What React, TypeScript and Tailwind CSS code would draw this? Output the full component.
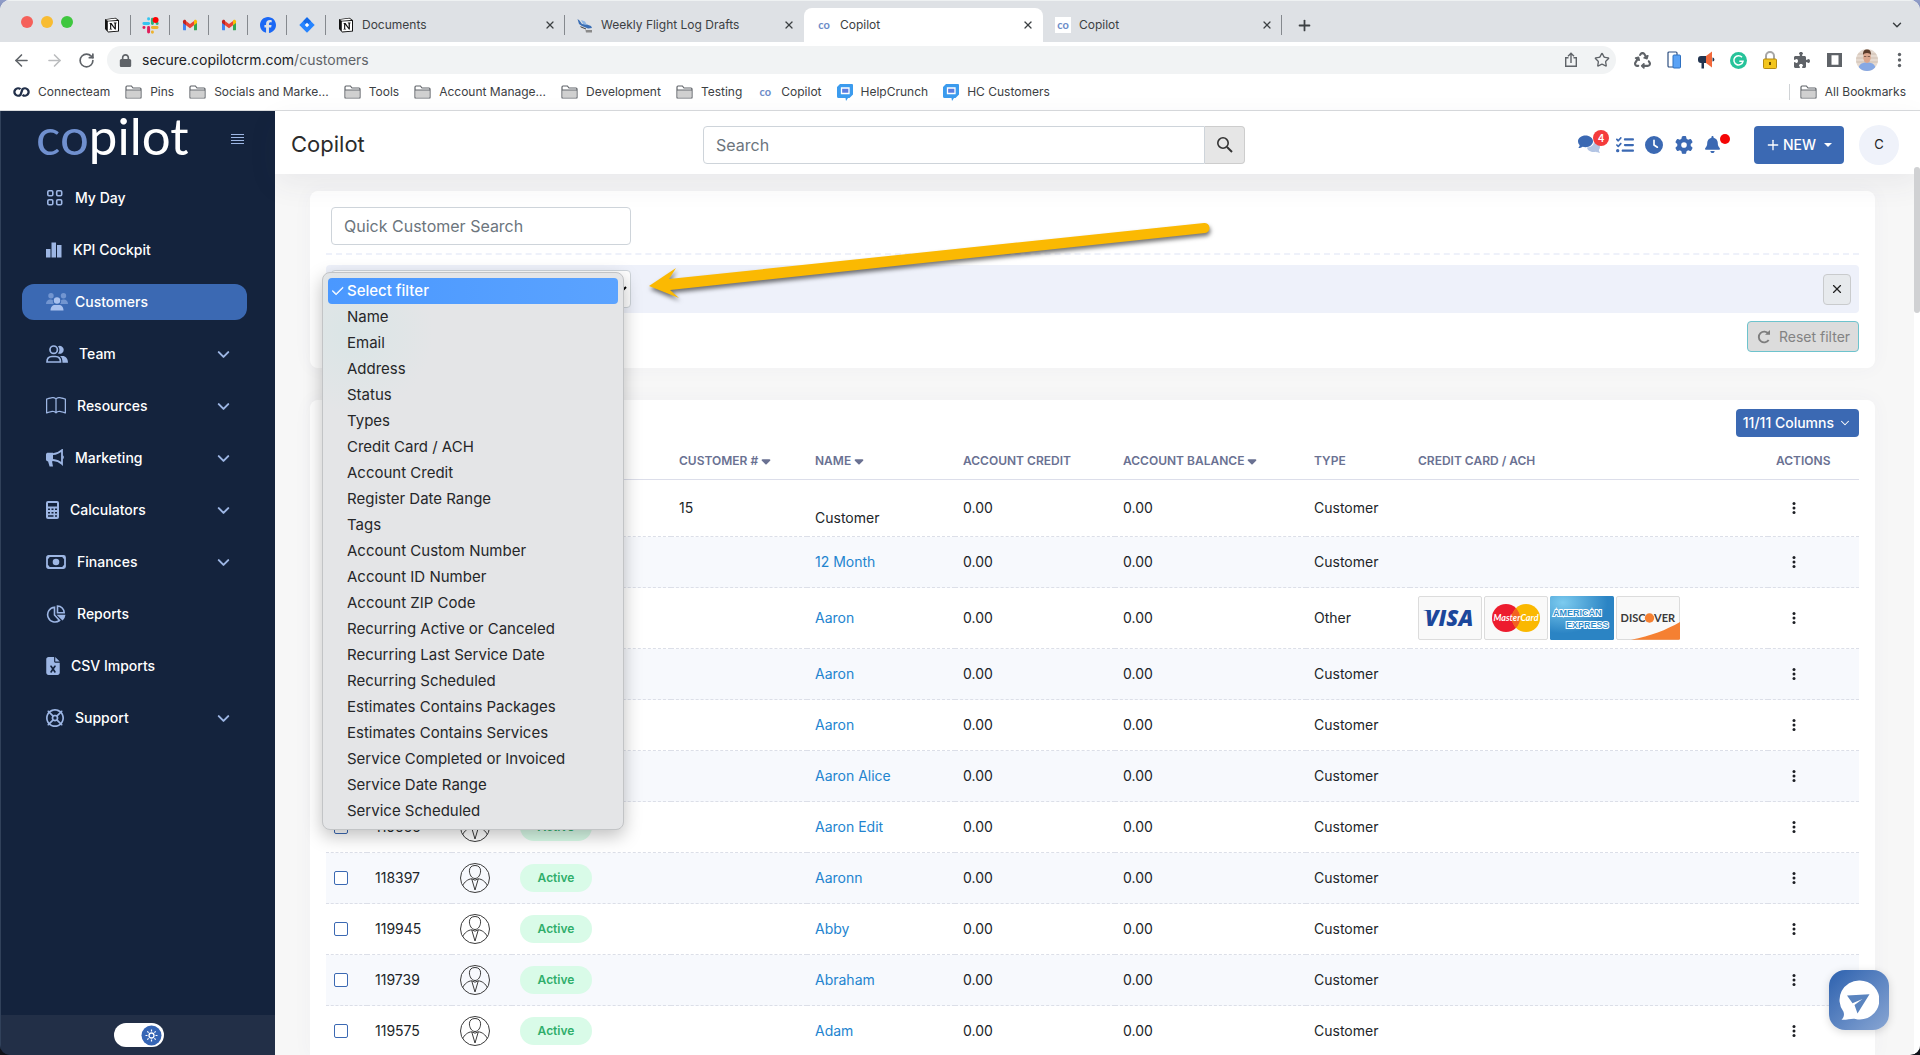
import React from "react";
import {
  FaRegLifeRing, FaClock, FaGear, FaBell, FaListCheck, FaFileExcel, FaCaretDown,
  FaFacebook, FaPuzzlePiece, FaRecycle, FaLock,
} from "react-icons/fa6";
import { BsBook, BsCheck2 } from "react-icons/bs";
import { ArrowLeft, ArrowRight, ChevronDown, Plus, RotateCw, Star, X } from "lucide-react";

const Notion = () => (
  <svg width="16" height="16" viewBox="0 0 16 16">
    <path d="M1 2.2 11.5.8 15 3.2V14.6L4.2 15.4 1 12z" fill="#111" />
    <path d="M3.8 4.6 14 3.9v9.9l-10.2.7z" fill="#fff" />
    <path d="M1.8 2.7 11.3 1.6l2 1.3-9.5.8z" fill="#fff" />
    <path d="M5.4 6h2.2l3 4.6V6.4l-.8-.2v-.6h2.8v.6l-.7.2v6.2h-1L7.2 7.8v4l.9.3v.5H5.4V12l.7-.3V6.7l-.7-.2z" fill="#111" />
  </svg>
);
const Slack = () => (
  <svg width="17" height="17" viewBox="0 0 16 16" strokeWidth="2.8" strokeLinecap="round">
    <path d="M6.2 1.6v.2M1.8 6.2h4.4" stroke="#36c5f0" />
    <path d="M9.8 2v4.2M14.2 6.2h.1" stroke="#2eb67d" />
    <path d="M9.8 14.3v-.1M9.8 9.8h4.4" stroke="#ecb22e" />
    <path d="M6.2 9.8v4.4M1.8 9.8h.1" stroke="#e01e5a" />
    <circle cx="12.8" cy="2.8" r="2.8" fill="#f00" />
  </svg>
);
const Gmail = () => (
  <svg width="16" height="16" viewBox="0 0 16 16">
    <path d="M1 4v8.4c0 .5.4.9.9.9H4V7z" fill="#4285f4" />
    <path d="M15 4v8.4c0 .5-.4.9-.9.9H12V7z" fill="#34a853" />
    <path d="M4 3.9v4.3l4 3 4-3V3.9L8 7z" fill="#ea4335" />
    <path d="M1 4.3c0-1.5 1.6-2 2.5-1.3l.5.4v4.8L1 6z" fill="#c5221f" />
    <path d="M15 4.3c0-1.5-1.6-2-2.5-1.3l-.5.4v4.8L15 6z" fill="#fbbc04" />
  </svg>
);
const Jira = () => (
  <svg width="16" height="16" viewBox="0 0 16 16">
    <path d="M8 .3 15.7 8 8 15.7.3 8z" fill="#2684ff" />
    <path d="M8 .3 11.9 4.2 8 8 4.2 4.2z" fill="#1268e8" />
    <path d="M8 5.8 10.2 8 8 10.2 5.8 8z" fill="#fff" />
  </svg>
);
const Plane = () => (
  <svg width="16" height="16" viewBox="0 0 16 16">
    <path d="M.5 2 2.5 3.4 5 7l5 .5 4 1.5 1 2-4 .5-6-2.5L2 7z" fill="#3b6fb5" />
    <path d="M4 3l4 1.5L10 8 6 7z" fill="#8fb6e4" />
    <path d="M8.500 13H15v2.500H9z" fill="#8a8a8a" />
    <path d="M3 9l6 2.500v1L4 10.500z" fill="#444" />
  </svg>
);
const Co = () => <span className="w-4 text-center font-['Lato'] text-[11px] font-bold leading-4 text-[#6b8bc8]">co</span>;
const Folder = () => (
  <svg width="17" height="14" viewBox="0 0 17 14">
    <path d="M1 12.4V2.2C1 1.5 1.4 1 2 1h4.4l1.6 2H15c.6 0 1 .4 1 1v8.4c0 .4-.3.6-.6.6H1.6c-.4 0-.6-.2-.6-.6z" fill="#fff" stroke="#5f6368" strokeWidth="1.2" />
    <path d="M1.6 5.2h13.8v7.2H1.6z" fill="#d0d0d0" />
    <path d="M1 5h15" stroke="#5f6368" strokeWidth="1" />
  </svg>
);
const HelpCrunch = () => (
  <svg width="16" height="17" viewBox="0 0 16 17">
    <path d="M3 0h12a1 1 0 0 1 1 1v9.5L12.5 14H11l-2 3-.5-3H1.5A1.5 1.5 0 0 1 0 12.500V3z" fill="#3b9bee" />
    <path d="M4.500 4h7.500v5.500H4.500z" fill="#5c7de0" stroke="#fff" strokeWidth="1.3" />
  </svg>
);
const Infinity8 = () => (
  <svg width="17" height="12" viewBox="0 0 17 12" fill="none" stroke="#22304a" strokeWidth="2.300">
    <path d="M7.500 3.200A3.700 3.700 0 1 0 7.500 8.800L9.500 3.200A3.700 3.700 0 1 1 9.500 8.800" />
  </svg>
);

const Kebab = ({ r = 2 }: { r?: number }) => (
  <svg width="5" height="16" viewBox="0 0 5 16" fill="currentColor">
    <circle cx="2.500" cy="2.500" r={r} /><circle cx="2.500" cy="8" r={r} /><circle cx="2.500" cy="13.500" r={r} />
  </svg>
);

/* ---------- sidebar icons ---------- */
const IconGrid = () => (
  <svg width="18" height="18" viewBox="0 0 18 18" fill="none" stroke="#9db6e4" strokeWidth="1.600">
    <rect x="1.800" y="1.800" width="5" height="5" rx="1.200" /><rect x="10.700" y="1.800" width="5" height="5" rx="1.200" />
    <rect x="1.800" y="10.700" width="5" height="5" rx="1.200" /><rect x="10.700" y="10.700" width="5" height="5" rx="1.200" />
  </svg>
);
const IconBars = () => (
  <svg width="16" height="16" viewBox="0 0 16 16" fill="#9db6e4">
    <path d="M0 7h4.500v8.500H0zM5.500 .5H10v15H5.500zM11 3h4.500v12.500H11z" />
  </svg>
);
const IconCustomers = () => (
  <svg width="22" height="18" viewBox="0 0 22 18" fill="#a9c1ee">
    <g opacity=".5"><circle cx="5" cy="2.800" r="2.700" /><circle cx="17.500" cy="2.800" r="2.700" /><path d="M0 11c0-3 2-4.500 4-4.500 1.500 0 2.300.4 3 1-.3 1.500 0 2.700 1 3.500zM22 11c0-3-2-4.500-4-4.500-1.500 0-2.300.4-3 1 .3 1.500 0 2.700-1 3.500z" /></g>
    <circle cx="11" cy="7.500" r="3.200" /><path d="M4.500 17.500C4.500 14 6.500 12 9 12h4c2.500 0 4.500 2 4.500 5.500z" />
  </svg>
);
const IconTeam = () => (
  <svg width="22" height="18" viewBox="0 0 22 18">
    <circle cx="7.700" cy="4.700" r="3.700" fill="none" stroke="#9db6e4" strokeWidth="1.700" />
    <path d="M1 17c0-3.500 2.200-5.500 5-5.500h3.500c2.800 0 5 2 5 5.500z" fill="none" stroke="#9db6e4" strokeWidth="1.700" />
    <path d="M12 8.400a5.200 5.200 0 0 0 0-7.200 4 4 0 1 1 0 7.200zM14 11h2.500c3 0 5.500 2.200 5.500 6.800h-5.500C16.500 14 15.500 12 14 11z" fill="#9db6e4" />
  </svg>
);
const IconHorn = () => (
  <svg width="18" height="18" viewBox="0 0 18 18" fill="#9db6e4">
    <path d="M0 5.500C0 4.400.9 3.800 2 3.800h5v8.500H6l1 5.200H3.600L2 12.300C.9 12.300 0 11.500 0 10.400z" />
    <path d="M7 5.200C11 5 13.500 3.500 16 1.200v13.700c-2.500-2.400-5-3.600-9-3.900" fill="none" stroke="#9db6e4" strokeWidth="1.800" />
    <path d="M16.500 6.300c1.800.6 1.800 3.300 0 4z" />
  </svg>
);
const IconCalc = () => (
  <svg width="13" height="18" viewBox="0 0 13 18">
    <rect x="0" y="0" width="13" height="18" rx="2" fill="#9db6e4" />
    <path d="M2 2h9v3.500H2zM2 7.500h2V9H2zM5.500 7.500h2V9h-2zM9 7.500h2V9H9zM2 11h2v1.500H2zM5.500 11h2v1.500h-2zM9 11h2v1.500H9zM2 14.300h5.500v1.500H2zM9 14.300h2v1.500H9z" fill="#14233d" />
  </svg>
);
const IconMoney = () => (
  <svg width="20" height="14" viewBox="0 0 20 14">
    <rect x="1" y="1" width="18" height="12" rx="1.500" fill="none" stroke="#9db6e4" strokeWidth="1.800" />
    <circle cx="10" cy="7" r="3.300" fill="#9db6e4" />
    <path d="M1 4c1.600 0 2.700-1 2.700-3H1zM19 4c-1.600 0-2.700-1-2.700-3H19zM1 10c1.600 0 2.700 1 2.700 3H1zM19 10c-1.600 0-2.700 1-2.700 3H19z" fill="#9db6e4" />
  </svg>
);
const IconPie = () => (
  <svg width="20" height="18" viewBox="0 0 20 18" fill="none" stroke="#9db6e4" strokeWidth="1.600">
    <path d="M8.500 2.200A7.400 7.400 0 1 0 13.500 15.500L8.500 10z" />
    <path d="M11.500 1v6.800h6.700A6.800 6.800 0 0 0 11.500 1z" />
    <path d="M12.500 10.500h6a6.500 6.500 0 0 1-2 4z" fill="#9db6e4" />
  </svg>
);

type NavItem = { label: string; icon: React.ReactNode; more?: boolean; active?: boolean };
const NAV: NavItem[] = [
  { label: "My Day", icon: <IconGrid /> },
  { label: "KPI Cockpit", icon: <IconBars /> },
  { label: "Customers", icon: <IconCustomers />, active: true },
  { label: "Team", icon: <IconTeam />, more: true },
  { label: "Resources", icon: <BsBook size={20} />, more: true },
  { label: "Marketing", icon: <IconHorn />, more: true },
  { label: "Calculators", icon: <IconCalc />, more: true },
  { label: "Finances", icon: <IconMoney />, more: true },
  { label: "Reports", icon: <IconPie /> },
  { label: "CSV Imports", icon: <FaFileExcel size={18} className="-mx-0.5" /> },
  { label: "Support", icon: <FaRegLifeRing size={18} />, more: true },
];

const FILTERS = [
  "Select filter", "Name", "Email", "Address", "Status", "Types", "Credit Card / ACH", "Account Credit",
  "Register Date Range", "Tags", "Account Custom Number", "Account ID Number", "Account ZIP Code",
  "Recurring Active or Canceled", "Recurring Last Service Date", "Recurring Scheduled",
  "Estimates Contains Packages", "Estimates Contains Services", "Service Completed or Invoiced",
  "Service Date Range", "Service Scheduled",
];

type Row = { id?: string; num?: string; name: string; type?: string; plain?: boolean; cards?: boolean };
const ROWS: Row[] = [
  { num: "15", name: "Customer", plain: true },
  { name: "12 Month" },
  { name: "Aaron", type: "Other", cards: true },
  { name: "Aaron" },
  { name: "Aaron" },
  { name: "Aaron Alice" },
  { id: "119655", name: "Aaron Edit" },
  { id: "118397", name: "Aaronn" },
  { id: "119945", name: "Abby" },
  { id: "119739", name: "Abraham" },
  { id: "119575", name: "Adam" },
];

const BOOKMARKS: [string, React.ReactNode][] = [
  ["Connecteam", <Infinity8 />], ["Pins", <Folder />], ["Socials and Marke...", <Folder />], ["Tools", <Folder />],
  ["Account Manage...", <Folder />], ["Development", <Folder />], ["Testing", <Folder />], ["Copilot", <Co />],
  ["HelpCrunch", <HelpCrunch />], ["HC Customers", <HelpCrunch />],
];

function Tab({ icon, title, active, line }: { icon: React.ReactNode; title: string; active?: boolean; line?: boolean }) {
  return (
    <div className={`relative flex h-[34px] w-[239px] items-center pl-3 pr-[7px] ${active ? "rounded-t-lg bg-white" : ""}`}>
      <span className="flex w-4 shrink-0 justify-center">{icon}</span>
      <span className="ml-2 grow text-xs text-[#3c4043]">{title}</span>
      <button aria-label={`Close ${title}`} className="flex w-4 justify-center text-[#3c4043]"><X size={12} strokeWidth={2.5} /></button>
      {line && <span className="absolute right-0 top-[7px] h-5 w-px bg-[#85898e]" />}
    </div>
  );
}

function Browser() {
  return (
    <header className="shrink-0 border-b border-[#d9dbdd] bg-white">
      <div className="flex h-[42px] items-end border-t border-[#eef1f2] bg-[#dee1e5]">
        <div className="flex w-[92px] gap-2 self-center pl-[21px]">
          <span className="size-3 rounded-full bg-[#f5605a]" />
          <span className="size-3 rounded-full bg-[#f8bc32]" />
          <span className="size-3 rounded-full bg-[#3fc73f]" />
        </div>
        {[<Notion />, <Slack />, <Gmail />, <Gmail />, <FaFacebook size={16} color="#1b68f5" />, <Jira />].map((ic, i) => (
          <div key={i} className="relative flex h-[34px] w-[39px] items-center justify-center">
            {ic}
            <span className="absolute right-0 top-[7px] h-5 w-px bg-[#85898e]" />
          </div>
        ))}
        <Tab icon={<Notion />} title="Documents" line />
        <Tab icon={<Plane />} title="Weekly Flight Log Drafts" />
        <Tab icon={<Co />} title="Copilot" active />
        <Tab icon={<span className="flex bg-white"><Co /></span>} title="Copilot" line />
        <button aria-label="New tab" className="mb-2 ml-3.5 text-[#3c4043]"><Plus size={17} strokeWidth={2.5} /></button>
        <button aria-label="Search tabs" className="mb-2.5 ml-auto mr-4 text-[#3c4043]"><ChevronDown size={14} strokeWidth={2.5} /></button>
      </div>
      <div className="flex h-9 items-center pr-[13px] text-[#5f6368]">
        <button aria-label="Back" className="ml-3"><ArrowLeft size={19} /></button>
        <button aria-label="Forward" className="ml-3.5 text-[#babcbe]"><ArrowRight size={19} /></button>
        <button aria-label="Reload" className="ml-3.5"><RotateCw size={17} strokeWidth={2.4} /></button>
        <div className="ml-3 flex h-7 grow items-center rounded-full bg-[#f1f3f4] pl-3 pr-1.5">
          <FaLock size={13} />
          <span className="ml-2.5 grow text-sm text-[#202124]">secure.copilotcrm.com<span className="text-[#5f6368]">/customers</span></span>
          <svg width="14" height="16" viewBox="0 0 14 16" fill="none" stroke="#5f6368" strokeWidth="1.400"><path d="M4.500 5.800H1.700v8.500h10.600V5.800H9.500M7 11V1.500M4 4.300l3-3 3 3" /></svg>
          <Star size={16} className="ml-4" />
        </div>
        <div className="ml-3 flex items-center">
          <span className="flex w-8 justify-center pr-1"><FaRecycle size={17} /></span>
          <span className="flex w-8 justify-center pr-1">
            <svg width="16" height="18" viewBox="0 0 16 18"><rect x="2" y="1" width="9" height="15" rx="1" fill="#fff" stroke="#2e4f80" strokeWidth="1.200" /><rect x="7" y="4" width="7.500" height="13" rx="1" fill="#5aa2f5" stroke="#2e70c0" /></svg>
          </span>
          <span className="flex w-8 justify-center pr-1">
            <svg width="17" height="18" viewBox="0 0 17 18"><path d="M3 5h5v7H6v5.500H3.500V12H3a3 3 0 0 1-3-3V8a3 3 0 0 1 3-3z" fill="#22344f" /><path d="M8 5l6-4.500v16L8 12z" fill="#f2693b" /><path d="M14.500 6.500c2.500.3 2.500 4 0 4z" fill="#22344f" /></svg>
          </span>
          <span className="flex w-8 justify-center pr-1">
            <svg width="17" height="17" viewBox="0 0 17 17"><circle cx="8.500" cy="8.500" r="8.500" fill="#27c39a" /><path d="M12 5.300A4.600 4.600 0 1 0 13 9.300H9.300" fill="none" stroke="#fff" strokeWidth="1.500" /></svg>
          </span>
          <span className="flex w-8 justify-center pr-1">
            <svg width="14" height="18" viewBox="0 0 14 18"><path d="M3 9V5a4 4 0 0 1 8 0v4" fill="none" stroke="#a6a6a6" strokeWidth="2" /><rect x=".5" y="8" width="13" height="9.500" rx="1" fill="#f3c51d" stroke="#b58a12" /><path d="M7 11v3" stroke="#6b4e00" strokeWidth="2" /></svg>
          </span>
          <span className="flex w-8 justify-center pr-1"><FaPuzzlePiece size={16} /></span>
          <span className="flex w-8 justify-center pr-1">
            <svg width="15" height="16" viewBox="0 0 15 16"><path d="M0 1h15v14H0zM4.500 3.300v9.400h7V3.300z" fill="#5f6368" fillRule="evenodd" /></svg>
          </span>
          <svg className="ml-1" width="22" height="22" viewBox="0 0 22 22">
            <clipPath id="me"><circle cx="11" cy="11" r="11" /></clipPath>
            <g clipPath="url(#me)"><path d="M0 0h22v22H0z" fill="#e5d9cf" /><path d="M0 5h22M0 9h22M0 13h22" stroke="#cfbfb2" /><path d="M2 22c0-6 3-8.500 9-8.500s9 2.500 9 8.500z" fill="#86a8e4" /><ellipse cx="11" cy="8" rx="3.800" ry="6" fill="#dba68d" /><path d="M7 6C7 2 8 .5 11 .5S15 2 15 6C14 3.300 8 3.300 7 6z" fill="#5a3b2a" /><path d="M8 7.500h2.300M11.700 7.500H14" stroke="#6b4a3c" strokeWidth=".8" /></g>
          </svg>
          <button aria-label="Menu" className="ml-[13px] flex w-4 justify-center"><Kebab r={1.7} /></button>
        </div>
      </div>
      <nav className="flex h-8 items-center pb-1 pl-[13px] text-xs text-[#3c4043]">
        {BOOKMARKS.map(([t, ic]) => (
          <a key={t} href="#" className="mr-[15px] flex items-center gap-2 whitespace-nowrap">{ic}{t}</a>
        ))}
        <a href="#" className="ml-auto mr-3.5 flex items-center gap-2 border-l border-[#d0d3d6] pl-2.5 leading-4"><Folder />All Bookmarks</a>
      </nav>
    </header>
  );
}

function Sidebar() {
  return (
    <aside className="flex w-[275px] shrink-0 flex-col border-l border-[#31415a] bg-[#14233d]">
      <div className="flex h-[61px] items-start justify-between pl-[35px] pr-[31px]">
        <span className="-mt-[5px] font-['Lato'] text-[51px] leading-[60px] text-white"><span className="text-[#7090cf]">co</span>pilot</span>
        <button aria-label="Toggle menu" className="mt-[22px]">
          <svg width="13" height="12" viewBox="0 0 13 12" stroke="#9db6e4" strokeWidth="1.200"><path d="M0 1.500h13M0 4.500h13M0 7.500h13M0 10.500h13" /></svg>
        </button>
      </div>
      <nav className="flex grow flex-col gap-4 pl-[21px] pr-7 pt-2">
        {NAV.map((n) => (
          <a key={n.label} href="#" className={`flex h-9 items-center rounded-xl pl-6 pr-3.5 text-sm font-medium text-white ${n.active ? "bg-[#3b69b3]" : ""}`}>
            <span className="text-[#9db6e4]">{n.icon}</span>
            <span className={`grow ${n.active ? "ml-[7px]" : "ml-[11px]"}`}>{n.label}</span>
            {n.more && <ChevronDown size={19} strokeWidth={2.5} className="text-[#9db6e4]" />}
          </a>
        ))}
      </nav>
      <div className="flex h-10 items-center justify-center bg-[#222f47] pl-0.5">
        <button aria-label="Light mode" className="flex h-6 w-[50px] items-center justify-end rounded-full bg-white pr-0.5">
          <svg width="21" height="21" viewBox="0 0 21 21"><circle cx="10.500" cy="10.500" r="10" fill="#3565b5" /><circle cx="10.500" cy="10.500" r="2.500" fill="none" stroke="#fff" strokeWidth="1.300" /><path d="M10.500 4.500v2M10.500 14.500v2M4.500 10.500h2M14.500 10.500h2M6.300 6.300l1.300 1.300M13.400 13.400l1.300 1.300M6.300 14.700l1.300-1.300M13.400 7.600l1.300-1.300" stroke="#fff" strokeWidth="1.200" /></svg>
        </button>
      </div>
    </aside>
  );
}

function TopBar() {
  return (
    <div className="relative z-10 flex h-[63px] shrink-0 items-center bg-white pl-4 pr-[21px] pt-1 shadow-[0_10px_30px_rgba(60,60,80,0.07)]">
      <h1 className="w-[412px] text-[22px] text-[#2b2b2b]">Copilot</h1>
      <form className="flex h-[38px] w-[542px]">
        <input aria-label="Search" placeholder="Search" className="min-w-0 grow rounded-l border border-[#ced4da] px-3 text-base placeholder:text-[#6c757d]" />
        <button aria-label="Submit search" type="button" className="flex w-10 items-center justify-center rounded-r border border-l-0 border-[#cdcdcd] bg-[#e6e6e6]">
          <svg width="17" height="17" viewBox="0 0 17 17" fill="none" stroke="#333" strokeWidth="1.600"><circle cx="7" cy="7" r="5.200" /><path d="M11 11l5 5" strokeWidth="2" /></svg>
        </button>
      </form>
      <div className="ml-auto flex items-center text-[#3b69b3]">
        <button aria-label="Messages" className="relative mr-[15px]">
          <svg width="23" height="19" viewBox="0 0 23 19">
            <path d="M16 6.500c3.500.3 6 2.400 6 5.200 0 1.200-.4 2.300-1.200 3.200.1 1 .6 2 1.200 3-1.700 0-3-.4-4-1.200-4 1-8.500-.7-9-4.200C13 12.300 16 10 16 6.500z" fill="#b3c5e4" />
            <path d="M7.500.5C11.600.5 15 3 15 6.300s-3.400 5.900-7.500 5.900c-1 0-2-.2-2.900-.4-1 .7-2.500 1.300-4.300 1.300.7-.8 1.300-1.800 1.400-2.900C.7 9.200 0 7.800 0 6.300 0 3 3.400.5 7.500.5z" fill="#3b69b3" />
          </svg>
          <span className="absolute -right-2 -top-[5px] flex size-4 items-center justify-center rounded-full bg-[#f43b3b] text-[10px] font-semibold text-white">4</span>
        </button>
        <button aria-label="Tasks" className="mr-[11px]"><FaListCheck size={18} /></button>
        <button aria-label="Recent" className="mr-3"><FaClock size={18} /></button>
        <button aria-label="Settings" className="mr-[11px]"><FaGear size={18} /></button>
        <button aria-label="Notifications" className="relative mr-[33px]"><FaBell size={17} /><span className="absolute -right-[9px] -top-0.5 size-2.5 rounded-full bg-[#f50505]" /></button>
        <button className="flex h-[38px] w-[90px] items-center rounded bg-[#3b69b3] pl-[11px] text-sm font-medium text-white">
          <Plus size={16} strokeWidth={2} className="mr-0.5" />NEW
          <span className="ml-2 border-x-4 border-t-4 border-x-transparent border-t-white" />
        </button>
        <button className="ml-[15px] size-10 rounded-full bg-[#eff2fa] text-[13px] text-[#222]">C</button>
      </div>
    </div>
  );
}

function FilterCard() {
  return (
    <section className="relative rounded-lg bg-white px-4 py-4 shadow-[0_0_20px_rgba(76,87,125,0.04)]">
      <div className="mx-[5px]">
        <input aria-label="Quick Customer Search" placeholder="Quick Customer Search" className="block h-[38px] w-[300px] rounded border border-[#ced4da] px-3 text-base placeholder:text-[#6c757d]" />
      </div>
      <div className="mb-2.5 mt-2 border-t-2 border-dashed border-[#eef1fa]" />
      <div className="flex h-12 items-center justify-between rounded bg-[#eef1fa] pl-[5px] pr-2">
        <div className="relative w-[300px]">
          <select aria-label="Filter" defaultValue="Select filter" className="h-[38px] w-full rounded border border-[#ced4da] bg-white px-3 text-base">
            {FILTERS.map((f) => <option key={f}>{f}</option>)}
          </select>
          <ul role="listbox" aria-label="Filter options" className="absolute -left-[9px] top-0.5 z-20 w-[302px] rounded-lg border border-[#c2c4c6] bg-[#e4e5e7] bg-[radial-gradient(circle_at_30px_60px,#dae5e6,#e4e5e7_80px)] px-[5px] py-[5px] text-[#262729] shadow-[0_6px_18px_rgba(0,0,0,0.25)]">
            {FILTERS.map((f, i) => (
              <li key={f} role="option" aria-selected={i === 0} className={`flex h-[26px] items-center rounded pl-0.5 text-[15px] ${i === 0 ? "bg-linear-to-r from-[#4a98ff] to-[#5ba3ff] font-medium text-white" : ""}`}>
                <span className="flex w-[17px] items-center">{i === 0 && <BsCheck2 size={15} strokeWidth={0.7} />}</span>{f}
              </li>
            ))}
          </ul>
        </div>
        <button aria-label="Remove filter" className="flex h-[31px] w-7 items-center justify-center rounded border border-[#c9cbcd] bg-[#e7eaed] text-[#222]"><X size={14} strokeWidth={2} /></button>
      </div>
      <div className="mt-2 flex justify-end">
        <button className="flex h-[31px] w-28 items-center rounded-sm border border-[#6dc3cd] bg-[#dcdcdc] pl-[9px] text-sm text-[#838383]">
          <svg className="mr-2" width="14" height="14" viewBox="0 0 14 14" fill="none" stroke="#7d7d7d" strokeWidth="1.900"><path d="M11.500 3.700A5.400 5.400 0 1 0 11.700 10" /><path d="M8 4.800h5V0z" fill="#7d7d7d" stroke="none" /></svg>
          Reset filter
        </button>
      </div>
    </section>
  );
}

const Person = () => (
  <svg width="30" height="30" viewBox="0 0 30 30" fill="none" stroke="#3b3b3b" strokeWidth="1">
    <circle cx="15" cy="15" r="14.500" />
    <path d="M15 2.500c3.500 0 5.600 2 5.600 5.300 0 3.700-2.200 7.700-5.600 7.700s-5.600-4-5.600-7.700C9.400 4.500 11.500 2.500 15 2.500z" />
    <path d="M2.700 22.500C4.300 19 8 16 11.700 15.800L15 27l3.300-11.200C22 16 25.700 19 27.300 22.500M11.700 15.800l3.300 1.400 3.300-1.400" />
  </svg>
);

function Cards() {
  return (
    <div className="flex gap-0.5">
      <svg width="64" height="44" viewBox="0 0 64 44">
        <rect x=".5" y=".5" width="63" height="43" rx="1.500" fill="#f9f9f9" stroke="#dcdcdc" />
        <path d="M5 14h6l3 7-2-5z" fill="#1a3f8f" />
        <text x="7" y="30" fontFamily="Open Sans" fontWeight="800" fontStyle="italic" fontSize="22" fill="#1c479b">VISA</text>
      </svg>
      <svg width="64" height="44" viewBox="0 0 64 44">
        <rect x=".5" y=".5" width="63" height="43" rx="1.500" fill="#f9f9f9" stroke="#dcdcdc" />
        <circle cx="22" cy="22" r="14" fill="#ed1c2e" /><circle cx="42" cy="22" r="14" fill="#fab800" />
        <path d="M32 12.200a14 14 0 0 1 0 19.600 14 14 0 0 1 0-19.600z" fill="#f26122" />
        <text x="32" y="25" textAnchor="middle" fontFamily="Lato" fontWeight="700" fontStyle="italic" fontSize="9" fill="#fff">MasterCard</text>
      </svg>
      <svg width="64" height="44" viewBox="0 0 64 44">
        <defs><radialGradient id="ax" cx=".2" cy=".15" r=".7"><stop offset="0" stopColor="#7ccbef" /><stop offset="1" stopColor="#2b84c4" /></radialGradient></defs>
        <rect width="64" height="44" rx="1.500" fill="url(#ax)" />
        <g fontFamily="Liberation Sans" fontWeight="700" fontSize="9" fill="#2f8dcb" stroke="#fff" strokeWidth="2" paintOrder="stroke">
          <text x="3" y="20">AMERICAN</text><text x="16" y="32">EXPRESS</text>
        </g>
      </svg>
      <svg width="64" height="44" viewBox="0 0 64 44">
        <rect x=".5" y=".5" width="63" height="43" rx="1.500" fill="#f9f9f9" stroke="#dcdcdc" />
        <path d="M15 43.800C35 40 50 34 64 26v16.500c0 .8-.5 1.300-1.300 1.300z" fill="#f58032" />
        <g fontFamily="Lato" fontWeight="700" fontSize="11" fill="#3a3a3a">
          <text x="29.500" y="26" textAnchor="end">DISC</text><text x="38" y="26">VER</text>
        </g>
        <circle cx="33.500" cy="22" r="4.700" fill="#f58032" />
      </svg>
    </div>
  );
}

const CELL = "border-b border-dashed border-[#dcdfe8] px-2";

function CustomersCard() {
  const th = (t: string, sort = false) => (
    <th key={t} className="border-b border-[#dcdeea] px-2 pt-1.5 text-left text-xs font-semibold text-[#6a7192]">
      <span className="flex items-center gap-px whitespace-nowrap">{t}{sort && <FaCaretDown size={14} />}</span>
    </th>
  );
  return (
    <section className="mt-8 rounded-t-lg bg-white px-4 pt-[9px] shadow-[0_0_20px_rgba(76,87,125,0.04)]">
      <div className="flex justify-end">
        <button className="flex h-7 items-center rounded-sm bg-[#3b69b3] px-[7px] text-sm font-medium text-white">11/11 Columns<ChevronDown size={14} strokeWidth={1.8} className="ml-1" /></button>
      </div>
      <table className="w-full table-fixed border-separate border-spacing-0 text-sm text-[#212529]">
        <colgroup>
          <col className="w-[41px]" /><col className="w-[85px]" /><col className="w-[60px]" /><col className="w-[159px]" />
          <col className="w-[136px]" /><col className="w-[148px]" /><col className="w-[160px]" /><col className="w-[191px]" />
          <col className="w-[104px]" /><col /><col className="w-[91px]" />
        </colgroup>
        <thead>
          <tr className="h-[43px]">
            {[0, 1, 2, 3].map((i) => <th key={i} className="border-b border-[#dcdeea]" />)}
            {th("CUSTOMER #", true)}{th("NAME", true)}{th("ACCOUNT CREDIT")}{th("ACCOUNT BALANCE", true)}
            {th("TYPE")}{th("CREDIT CARD / ACH")}{th("ACTIONS")}
          </tr>
        </thead>
        <tbody>
          {ROWS.map((r, i) => (
            <tr key={i} className={`${r.plain ? "h-[57px]" : r.cards ? "h-[61px]" : "h-[51px]"} ${i % 2 ? "bg-[#f7f9fd]" : ""}`}>
              <td className={CELL}><input type="checkbox" aria-label={`Select ${r.name}`} className="block size-3.5 appearance-none rounded-xs border border-[#3b69b3] bg-white" /></td>
              <td className={CELL}>{r.id}</td>
              <td className={CELL}><Person /></td>
              <td className={CELL}>{r.id && <span className="flex h-7 w-[72px] items-center justify-center rounded-full bg-[#d9fbe8] text-xs font-semibold text-[#2fae6b]">Active</span>}</td>
              <td className={CELL}>{r.num}</td>
              <td className={CELL}>{r.plain ? <span className="block pt-5">{r.name}</span> : <a href="#" className="text-[#2384cf]">{r.name}</a>}</td>
              <td className={CELL}>0.00</td>
              <td className={CELL}>0.00</td>
              <td className={CELL}>{r.type ?? "Customer"}</td>
              <td className={CELL}>{r.cards && <Cards />}</td>
              <td className={CELL}><button aria-label={`Actions for ${r.name}`} className="ml-4 block"><svg width="4" height="12" viewBox="0 0 4 12" fill="#1d1f24"><circle cx="2" cy="1.600" r="1.500" /><circle cx="2" cy="6" r="1.500" /><circle cx="2" cy="10.400" r="1.500" /></svg></button></td>
            </tr>
          ))}
        </tbody>
      </table>
    </section>
  );
}

export default function App() {
  return (
    <div className="h-screen overflow-hidden bg-[#10131a] bg-linear-to-b from-[#8f9cc8] to-[#10131a] to-10%">
      <div className="relative flex h-full flex-col overflow-hidden rounded-[10px] font-['Inter',sans-serif]">
        <Browser />
        <div className="flex min-h-0 grow">
          <Sidebar />
          <div className="relative flex min-w-0 grow flex-col bg-[#f7f7f7]">
            <TopBar />
            <main className="min-h-0 grow overflow-hidden pl-[35px] pr-[45px] pt-[17px]">
              <div className="relative">
                <FilterCard />
                <svg className="pointer-events-none absolute left-[330px] top-6 z-20 overflow-visible" width="580" height="90" viewBox="0 0 580 90">
                  <path d="M9 71 36 53 29 64 564 8a5 5 0 0 1 1 10L30 75l9 8z" fill="#fbb902" className="drop-shadow-[1px_3px_2px_rgba(0,0,0,0.55)]" />
                </svg>
              </div>
              <CustomersCard />
            </main>
            <div className="absolute bottom-0 right-0 top-[63px] w-1.5 bg-white" />
            <div className="absolute right-0 top-14 z-20 h-[146px] w-1.5 rounded-full bg-[#d0d1d3]" />
            <button aria-label="Open chat" className="absolute bottom-[25px] right-[31px] z-20 flex size-[60px] items-center justify-center rounded-2xl bg-linear-to-br from-[#2c61ae] to-[#89a6d3] shadow-[0_2px_8px_rgba(0,0,0,0.15)]">
              <svg width="40" height="40" viewBox="0 0 40 40"><path d="M20.500.5a19.500 19.500 0 1 1-4 38.500c-4-.8-8.500 1.200-14 .8 2.500-2.500 3-5 2-8A19.500 19.500 0 0 1 20.500.5z" fill="#fff" /><path d="M8 15.500 30.500 14.300 18.500 33.500l-3-8.500 8-6-10 4.200z" fill="#5a84bf" /></svg>
            </button>
          </div>
        </div>
      </div>
    </div>
  );
}
